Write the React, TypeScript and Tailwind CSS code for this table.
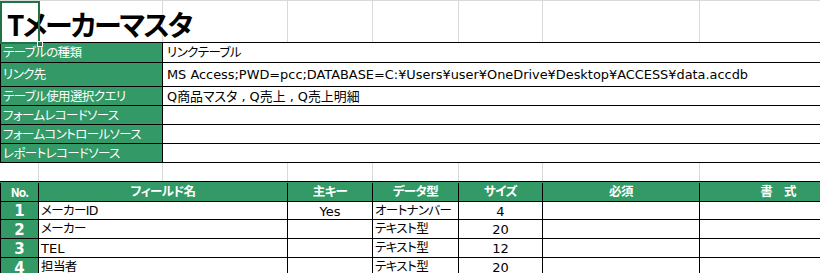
const cols = 'grid grid-cols-[39px_124px_125px_85px_86px_84px_157px_156px]'
const jp = 'text-[12.5px] tracking-[-0.6px]'

const info = [
  { label: 'テーブルの種類', value: 'リンクテーブル', jpValue: true, h: 'h-[20px]' },
  {
    label: 'リンク先',
    value: 'MS Access;PWD=pcc;DATABASE=C:¥Users¥user¥OneDrive¥Desktop¥ACCESS¥data.accdb',
    jpValue: false,
    h: 'h-[24px]',
  },
  { label: 'テーブル使用選択クエリ', value: 'Q商品マスタ , Q売上 , Q売上明細', jpValue: false, h: 'h-[19px]' },
  { label: 'フォームレコードソース', value: '', jpValue: true, h: 'h-[19px]' },
  { label: 'フォームコントロールソース', value: '', jpValue: true, h: 'h-[19px]' },
  { label: 'レポートレコードソース', value: '', jpValue: true, h: 'h-[19px]' },
]

const fields = [
  { no: 1, name: 'メーカーID', pk: 'Yes', type: 'オートナンバー', size: '4', h: 'h-[18px]' },
  { no: 2, name: 'メーカー', pk: '', type: 'テキスト型', size: '20', h: 'h-[19px]' },
  { no: 3, name: 'TEL', pk: '', type: 'テキスト型', size: '12', h: 'h-[19px]' },
  { no: 4, name: '担当者', pk: '', type: 'テキスト型', size: '20', h: 'h-[19px]' },
]

function GridRow({ className }: { className: string }) {
  return (
    <div className={`${cols} ${className}`}>
      {Array.from({ length: 8 }).map((_, i) => (
        <div key={i} className="border-r border-[#d9d9d9]" />
      ))}
    </div>
  )
}

export default function App() {
  return (
    <div className="relative h-[273px] w-[820px] overflow-hidden whitespace-nowrap bg-white font-['DejaVu_Sans','Noto_Sans_CJK_JP',sans-serif] text-[13px] leading-none text-black [font-feature-settings:'palt']">
      {/* title row */}
      <div className="relative h-[42px] border-t border-[#d9d9d9]">
        <GridRow className="h-full" />
        <div className="absolute bottom-[4px] left-[7px] font-['Noto_Sans_CJK_JP',sans-serif] text-[28px] font-bold tracking-[-2px]">
          Tメーカーマスタ
        </div>
        <div className="absolute left-0 top-0 h-[43px] w-[40px] border-2 border-[#217346]" />
        <div className="absolute left-[37px] top-[40px] z-10 h-[6px] w-[6px] border border-white bg-[#217346]" />
      </div>

      {/* table info */}
      <div className="w-[856px] border-t border-black">
        {info.map((r) => (
          <div key={r.label} className={`grid grid-cols-[163px_1fr] border-b border-black ${r.h}`}>
            <div className={`flex items-center border-r border-l border-black bg-[#339966] pl-[2px] pt-[2px] text-white ${jp}`}>
              {r.label}
            </div>
            <div className={`flex items-center pl-[4px] pt-[2px] ${r.jpValue ? jp : 'text-[12.9px]'}`}>{r.value}</div>
          </div>
        ))}
      </div>

      <GridRow className="h-[18px]" />

      {/* fields */}
      <div className="w-[856px] border-t border-black">
        <div className={`${cols} h-[20px] border-b border-black bg-[#339966] pt-[1px] font-bold text-white ${jp}`}>
          <div className="flex items-center justify-center border-r border-l border-black font-['Noto_Sans_CJK_JP',sans-serif] text-[12px] tracking-[-1px]">
            No.
          </div>
          <div className="col-span-2 flex items-center justify-center border-r border-black">フィールド名</div>
          <div className="flex items-center justify-center border-r border-black">主キー</div>
          <div className="flex items-center justify-center border-r border-black">データ型</div>
          <div className="flex items-center justify-center border-r border-black">サイズ</div>
          <div className="flex items-center justify-center border-r border-black">必須</div>
          <div className="flex items-center justify-center">書　式</div>
        </div>
        {fields.map((f) => (
          <div key={f.no} className={`${cols} overflow-hidden border-b border-black ${f.h}`}>
            <div className="flex items-center justify-center border-r border-l border-black bg-[#339966] pt-[2px] text-[15px] font-bold text-white">
              {f.no}
            </div>
            <div className={`col-span-2 flex items-center border-r border-black pl-[2px] pt-[1px] ${f.name === 'TEL' ? '' : jp}`}>
              {f.name}
            </div>
            <div className="flex items-center justify-center border-r border-black pt-[1px]">{f.pk}</div>
            <div className={`flex items-center overflow-hidden border-r border-black pl-[2px] pt-[1px] ${jp}`}>{f.type}</div>
            <div className="flex items-center justify-center border-r border-black pt-[1px]">{f.size}</div>
            <div className="border-r border-black" />
            <div />
          </div>
        ))}
      </div>
    </div>
  )
}
